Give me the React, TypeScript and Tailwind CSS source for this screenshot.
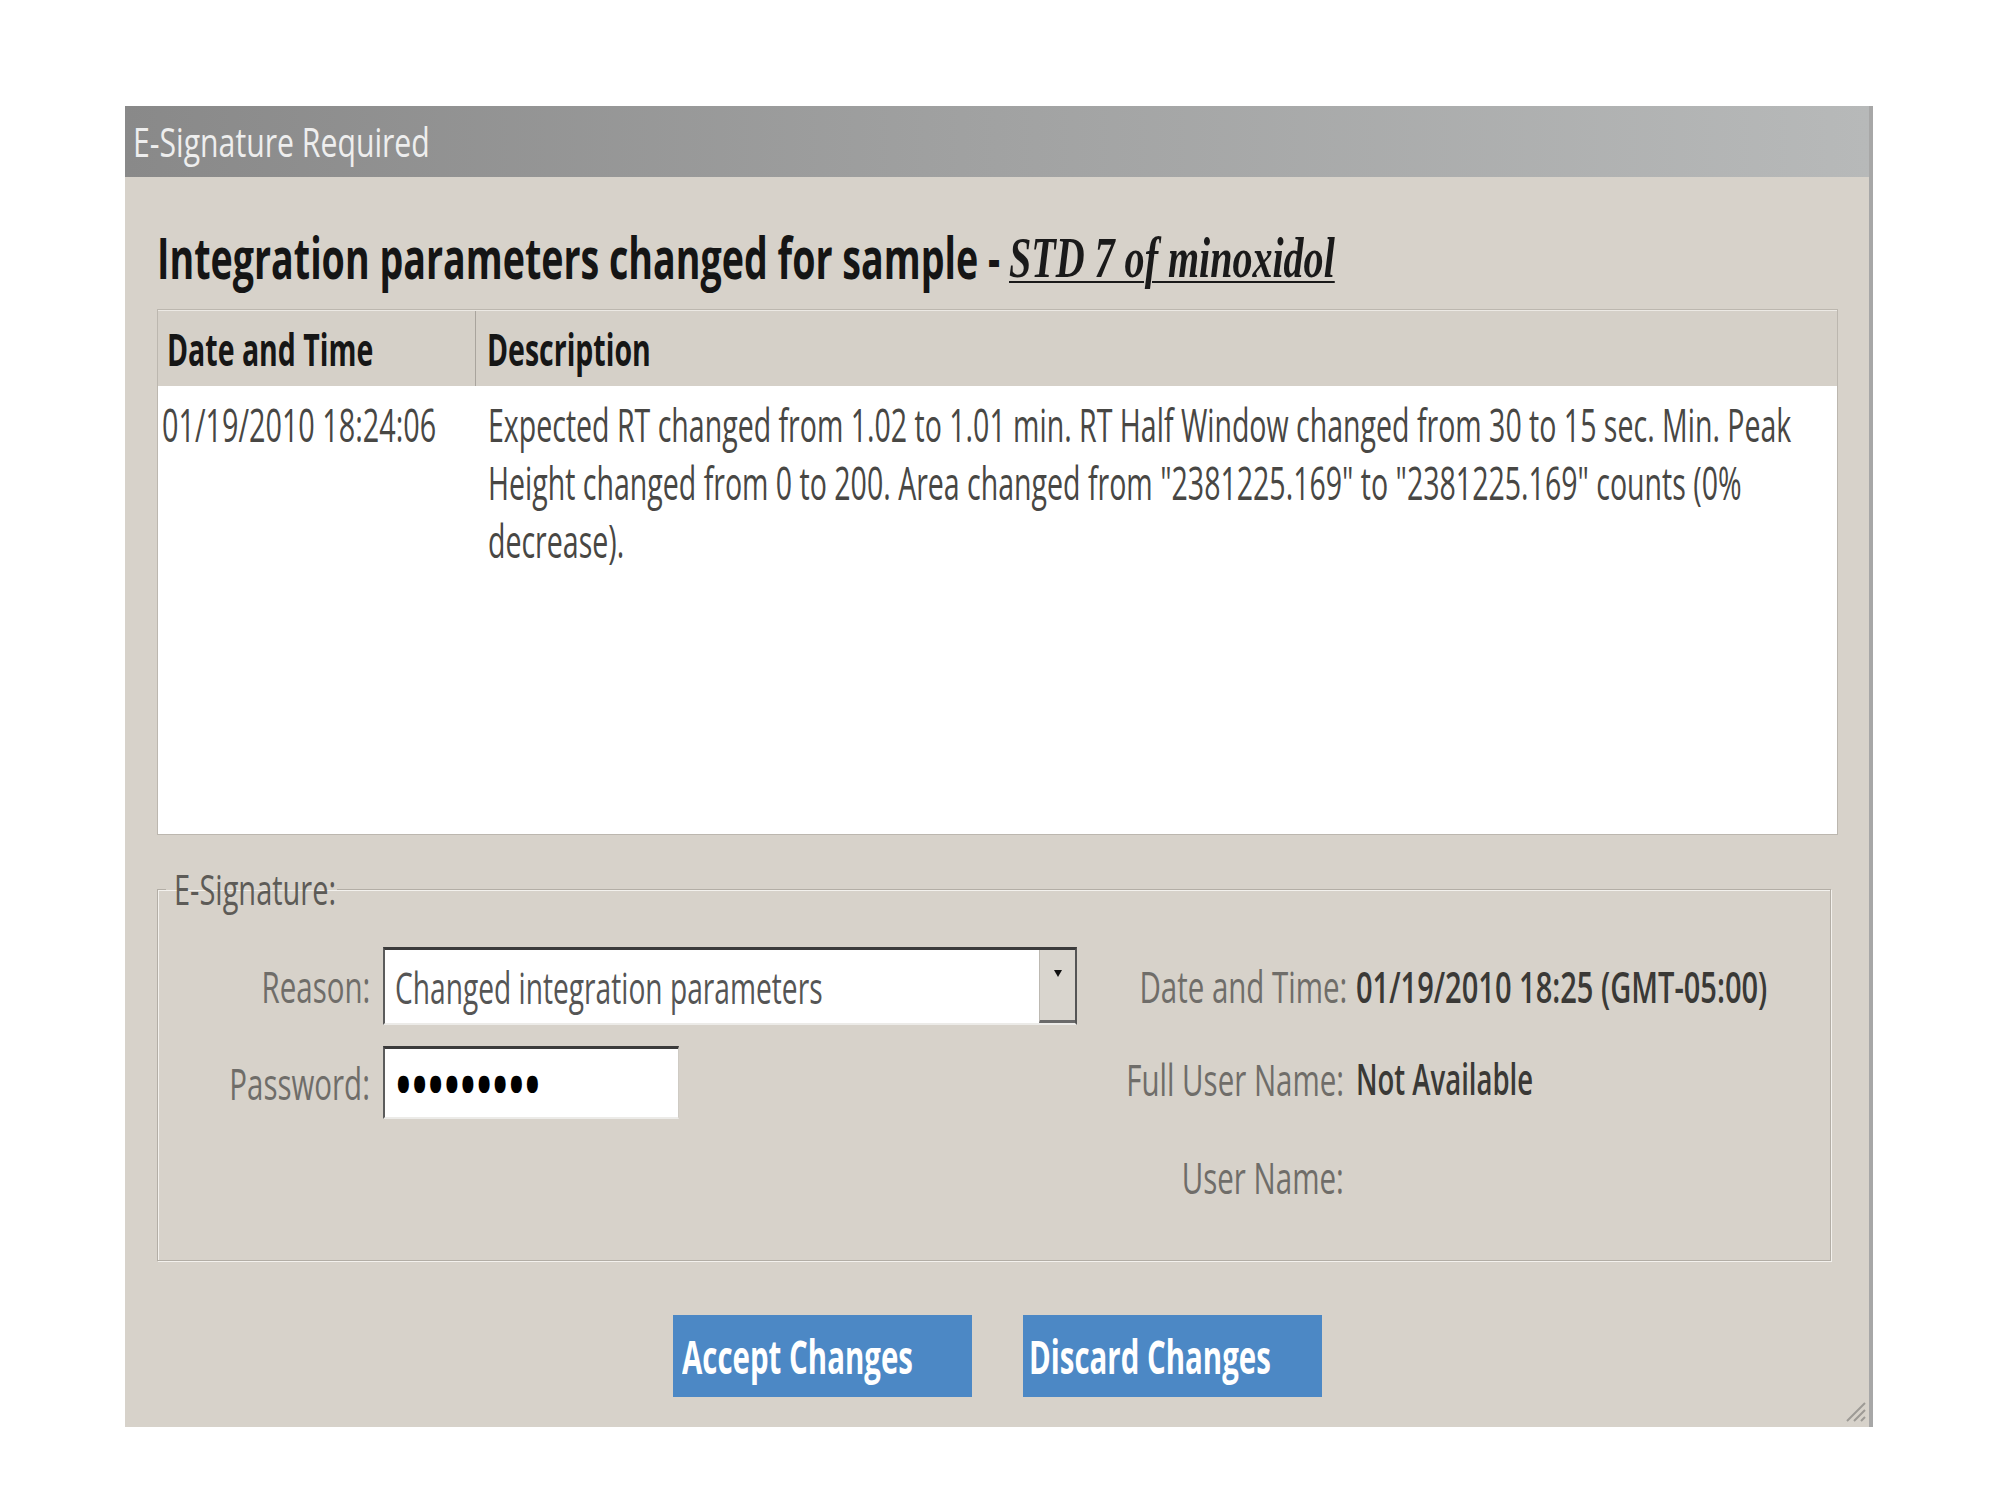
import React from 'react';

// Old e-signature dialog. Glyphs in the capture are very narrow, so text runs are
// squeezed with scale-x inside boxes that keep the real layout widths.

function Label({ children }: { children: React.ReactNode }) {
  return (
    <span className="inline-block origin-right scale-x-[0.67] whitespace-nowrap text-[44px] leading-none text-[#6f6d69]">
      {children}
    </span>
  );
}

function Value({ children, className }: { children: React.ReactNode; className: string }) {
  return (
    <span className={`inline-block origin-left whitespace-nowrap text-[44px] font-semibold leading-none text-[#3a3936] ${className}`}>
      {children}
    </span>
  );
}

function ReasonSelect() {
  return (
    <div className="flex h-[78px] w-[694px] items-stretch border-t-[3px] border-r-2 border-b-2 border-l-2 border-t-[#3b3b3b] border-r-[#555] border-b-[#ecebe8] border-l-[#5c5c5c] bg-white">
      <div className="flex min-w-0 flex-1 items-center pl-[10px]">
        <span className="inline-block origin-left scale-x-[0.64] whitespace-nowrap text-[44px] leading-none text-[#555]">
          Changed integration parameters
        </span>
      </div>
      <div className="relative flex w-[36px] shrink-0 items-start justify-center border-l border-b-[3px] border-l-[#bdb9b2] border-b-[#6a6a6a] bg-[#d9d5ce] pt-[18px]">
        <svg width="10" height="10" viewBox="0 0 10 10">
          <path d="M1 2 L9 2 L5 9 Z" fill="#111" />
        </svg>
      </div>
    </div>
  );
}

function PasswordInput() {
  return (
    <div className="flex h-[73px] w-[296px] items-center border-t-[3px] border-r border-b-2 border-l-2 border-t-[#3b3b3b] border-r-[#cfcbc4] border-b-[#ecebe8] border-l-[#5c5c5c] bg-white pl-[11px]">
      <span className="inline-block origin-left scale-x-[0.7] whitespace-nowrap text-[56px] font-bold leading-none tracking-[2px] text-black">
        •••••••••
      </span>
    </div>
  );
}

export default function App() {
  return (
    <div className="min-h-screen w-full overflow-hidden bg-white pt-[106px] pl-[125px] font-['Open_Sans',sans-serif]">
      <div className="relative flex h-[1321px] w-[1748px] flex-col border-r-4 border-[#a7a7a7] bg-[#d7d2ca]">
        {/* Title bar */}
        <div className="flex h-[71px] shrink-0 items-center bg-gradient-to-r from-[#898989] via-[#a1a2a2] to-[#b7b9b9] pl-[8px]">
          <span className="inline-block origin-left scale-x-[0.755] whitespace-nowrap text-[40px] leading-none text-[#eeeeee]">
            E-Signature Required
          </span>
        </div>

        <div className="flex flex-1 flex-col pr-[31px] pl-[32px]">
          {/* Heading */}
          <div className="mt-[52px] flex h-[57px] items-start">
            <div className="w-[852px] shrink-0">
              <span className="inline-block origin-left scale-x-[0.66] whitespace-nowrap text-[57px] font-bold leading-none text-[#151515]">
                Integration parameters changed for sample -
              </span>
            </div>
            <span className="inline-block origin-left scale-x-[0.69] whitespace-nowrap font-['Liberation_Serif',serif] text-[58px] font-bold italic leading-none text-[#1a1a1a] underline decoration-2 underline-offset-4">
              STD 7 of minoxidol
            </span>
          </div>

          {/* Changes table */}
          <div className="mt-[23px] flex h-[526px] flex-col border border-[#bcb7af]">
            <div className="flex h-[76px] shrink-0 border-t border-[#ece9e4] bg-[#d5d0c8]">
              <div className="w-[318px] shrink-0 border-r border-[#a9a49d] pt-[15px] pl-[9px]">
                <span className="inline-block origin-left scale-x-[0.633] whitespace-nowrap text-[45px] font-bold leading-none text-[#161616]">
                  Date and Time
                </span>
              </div>
              <div className="pt-[15px] pl-[11px]">
                <span className="inline-block origin-left scale-x-[0.633] whitespace-nowrap text-[45px] font-bold leading-none text-[#161616]">
                  Description
                </span>
              </div>
            </div>
            <div className="flex flex-1 bg-white pt-[9px] text-[46px] leading-[58px] text-[#484744]">
              <div className="w-[318px] shrink-0 pl-[4px]">
                <div className="origin-left scale-x-[0.626] whitespace-nowrap">01/19/2010 18:24:06</div>
              </div>
              <div className="min-w-0 flex-1 pl-[12px]">
                <div className="origin-left scale-x-[0.62] whitespace-nowrap">
                  Expected RT changed from 1.02 to 1.01 min. RT Half Window changed from 30 to 15 sec. Min. Peak
                </div>
                <div className="origin-left scale-x-[0.62] whitespace-nowrap">
                  Height changed from 0 to 200. Area changed from "2381225.169" to "2381225.169" counts (0%
                </div>
                <div className="origin-left scale-x-[0.62] whitespace-nowrap">decrease).</div>
              </div>
            </div>
          </div>

          {/* E-Signature group */}
          <fieldset className="mt-[33px] mr-[7px] border border-[#b3aea6] pb-[46px] shadow-[inset_1px_1px_0_#f3f1ed,1px_1px_0_#f3f1ed]">
            <legend className="ml-[8px] px-[8px]">
              <span className="-mr-[80px] inline-block origin-left scale-x-[0.69] whitespace-nowrap text-[42px] leading-none text-[#5d5b57]">
                E-Signature:
              </span>
            </legend>
            <div className="mt-[36px] grid grid-cols-[225px_694px_279px_minmax(0,1fr)] grid-rows-[78px_73px_74px] items-center gap-y-[21px]">
              <div className="flex justify-end pr-[13px]">
                <Label>Reason:</Label>
              </div>
              <ReasonSelect />
              <div className="flex justify-end pr-[9px]">
                <Label>Date and Time:</Label>
              </div>
              <div>
                <Value className="scale-x-[0.66]">01/19/2010 18:25 (GMT-05:00)</Value>
              </div>

              <div className="flex justify-end pr-[13px]">
                <Label>Password:</Label>
              </div>
              <PasswordInput />
              <div className="flex justify-end pb-[8px] pr-[12px]">
                <Label>Full User Name:</Label>
              </div>
              <div className="pb-[8px]">
                <Value className="scale-x-[0.625]">Not Available</Value>
              </div>

              <div />
              <div />
              <div className="flex justify-end pr-[12px]">
                <Label>User Name:</Label>
              </div>
              <div />
            </div>
          </fieldset>

          {/* Actions */}
          <div className="mt-[54px] flex justify-center gap-[51px]">
            <button className="flex h-[82px] w-[299px] items-center bg-[#4c88c5] pl-[9px]">
              <span className="inline-block origin-left scale-x-[0.64] whitespace-nowrap text-[46px] font-bold leading-none text-white">
                Accept Changes
              </span>
            </button>
            <button className="flex h-[82px] w-[299px] items-center bg-[#4c88c5] pl-[6px]">
              <span className="inline-block origin-left scale-x-[0.64] whitespace-nowrap text-[46px] font-bold leading-none text-white">
                Discard Changes
              </span>
            </button>
          </div>
        </div>

        {/* Resize grip */}
        <svg className="absolute right-[2px] bottom-[4px]" width="26" height="26" viewBox="0 0 26 26">
          <path d="M24 6 L6 24 M24 13 L13 24 M24 20 L20 24" stroke="#9d9a95" strokeWidth="2" />
        </svg>
      </div>
    </div>
  );
}
